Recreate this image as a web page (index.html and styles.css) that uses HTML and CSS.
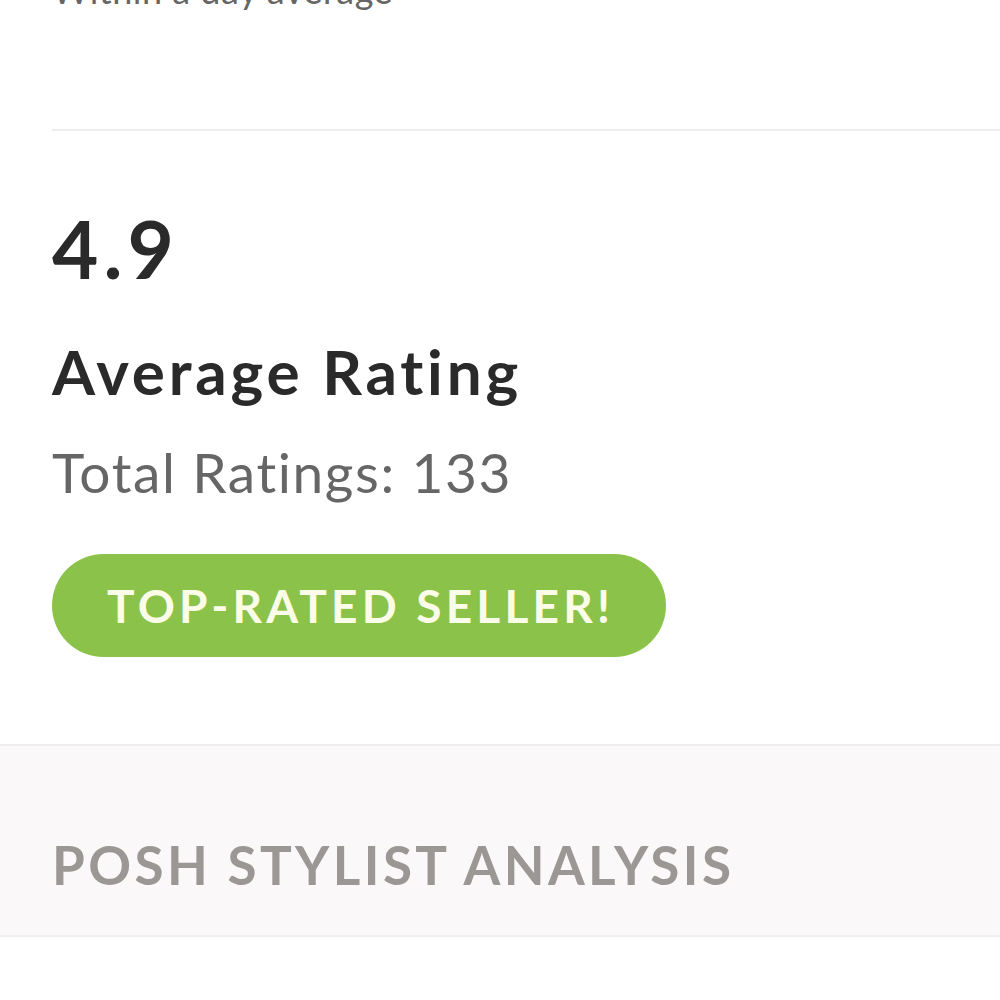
FILE: index.html
```html
<!DOCTYPE html>
<html>
<head>
<meta charset="utf-8">
<link rel="stylesheet" href="styles.css">
</head>
<body>
<div class="page">
  <div class="clip"><div class="clip-text">Within a day average</div></div>
  <div class="divider"></div>
  <section class="rating">
    <div class="score">4.9</div>
    <div class="label">Average Rating</div>
    <div class="total">Total Ratings: 133</div>
    <div class="badge">TOP-RATED SELLER!</div>
  </section>
  <section class="band">
    <div class="band-title">POSH STYLIST ANALYSIS</div>
  </section>
</div>
</body>
</html>
```

FILE: styles.css
```css
html, body {
  margin: 0;
  padding: 0;
  background: #ffffff;
}
.page {
  font-family: Lato, "Open Sans", sans-serif;
  width: 1000px;
}
.clip {
  height: 13px;
  overflow: hidden;
  padding-left: 52px;
}
.clip-text {
  font-size: 36px;
  line-height: 36px;
  margin-top: -28px;
  color: #666;
  letter-spacing: 0.5px;
}
.divider {
  margin-top: 116px;
  margin-left: 52px;
  height: 2px;
  background: #eeeceb;
}
.rating {
  padding-left: 52px;
  padding-top: 77px;
  padding-bottom: 87px;
}
.score {
  font-size: 80px;
  line-height: 80px;
  font-weight: 700;
  color: #2a2a2a;
  letter-spacing: 5px;
}
.label {
  margin-top: 52px;
  font-size: 62px;
  line-height: 62px;
  font-weight: 700;
  color: #2a2a2a;
  letter-spacing: 3.8px;
}
.total {
  margin-top: 43px;
  font-size: 55px;
  line-height: 55px;
  color: #666;
  letter-spacing: 1.6px;
}
.badge {
  margin-top: 54px;
  display: inline-flex;
  align-items: center;
  height: 103px;
  padding: 0 52px 0 55px;
  border-radius: 52px;
  background: #8bc34a;
  color: #fbfde8;
  font-size: 46px;
  font-weight: 700;
  letter-spacing: 4.2px;
}
.band {
  background: #faf8f9;
  border-top: 2px solid #f0eeec;
  border-bottom: 2px solid #f0eeec;
  height: 193px;
  box-sizing: border-box;
  padding-left: 52px;
  padding-top: 92px;
}
.band-title {
  font-size: 53px;
  line-height: 53px;
  font-weight: 700;
  color: #9b9794;
  letter-spacing: 3.4px;
}
```
